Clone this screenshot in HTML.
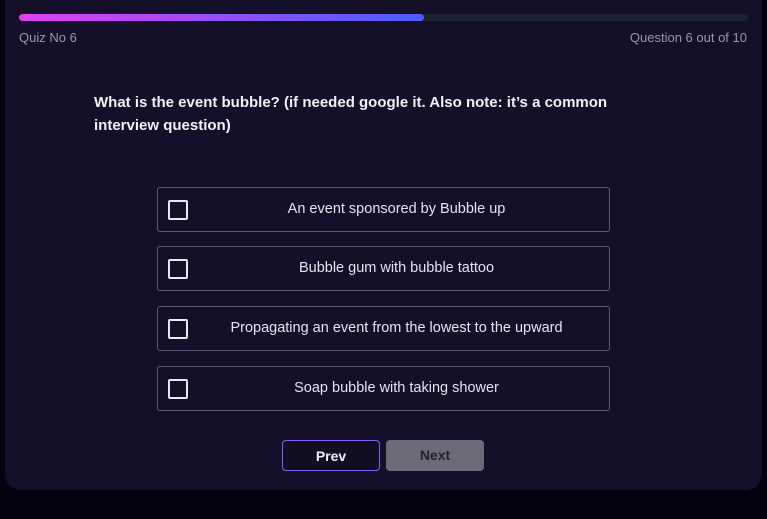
<!DOCTYPE html>
<html><head><style>
body{margin:0;width:767px;height:519px;background:#04030f;font-family:"Liberation Sans",sans-serif;overflow:hidden;position:relative}
.card{position:absolute;left:5px;top:-16px;width:757px;height:506px;background:#141029;border-radius:16px}
.bar{position:absolute;left:19px;top:14px;width:729px;height:7px;background:#1b2233;border-radius:4px}
.fill{position:absolute;left:0;top:0;width:405px;height:7px;border-radius:4px;background:linear-gradient(90deg,#e040f0,#4a5cff)}
.lab{position:absolute;top:30px;font-size:13px;color:#9a97a8}
.q{position:absolute;left:94px;top:91px;width:560px;font-size:15px;font-weight:bold;color:#f2f0f8;line-height:23px}
.opt{position:absolute;left:157px;width:453px;height:45px;border:1px solid #5c5878;border-radius:3px;box-sizing:border-box;color:#e6e2f2;font-size:14.5px;text-align:center;line-height:42px}
.cb{position:absolute;left:10px;top:12px;width:16px;height:16px;border:2px solid #ece8f6;border-radius:2px}
.opt span{display:block;margin-left:40px;padding-right:14px}
.btn{position:absolute;top:440px;width:98px;height:31px;box-sizing:border-box;border-radius:4px;font-size:14px;font-weight:bold;text-align:center;line-height:30px}
</style></head><body>
<div class="card"></div>
<div class="bar"><div class="fill"></div></div>
<div class="lab" style="left:19px">Quiz No 6</div>
<div class="lab" style="right:20px">Question 6 out of 10</div>
<div class="q">What is the event bubble? (if needed google it. Also note: it’s a common interview question)</div>
<div class="opt" style="top:187px"><div class="cb"></div><span>An event sponsored by Bubble up</span></div>
<div class="opt" style="top:246px"><div class="cb"></div><span>Bubble gum with bubble tattoo</span></div>
<div class="opt" style="top:306px"><div class="cb"></div><span>Propagating an event from the lowest to the upward</span></div>
<div class="opt" style="top:366px"><div class="cb"></div><span>Soap bubble with taking shower</span></div>
<div class="btn" style="left:282px;border:1px solid #8b5cf6;background:#120e24;color:#f2eefa">Prev</div>
<div class="btn" style="left:386px;background:#6e6b78;color:#24202f">Next</div>
</body></html>
